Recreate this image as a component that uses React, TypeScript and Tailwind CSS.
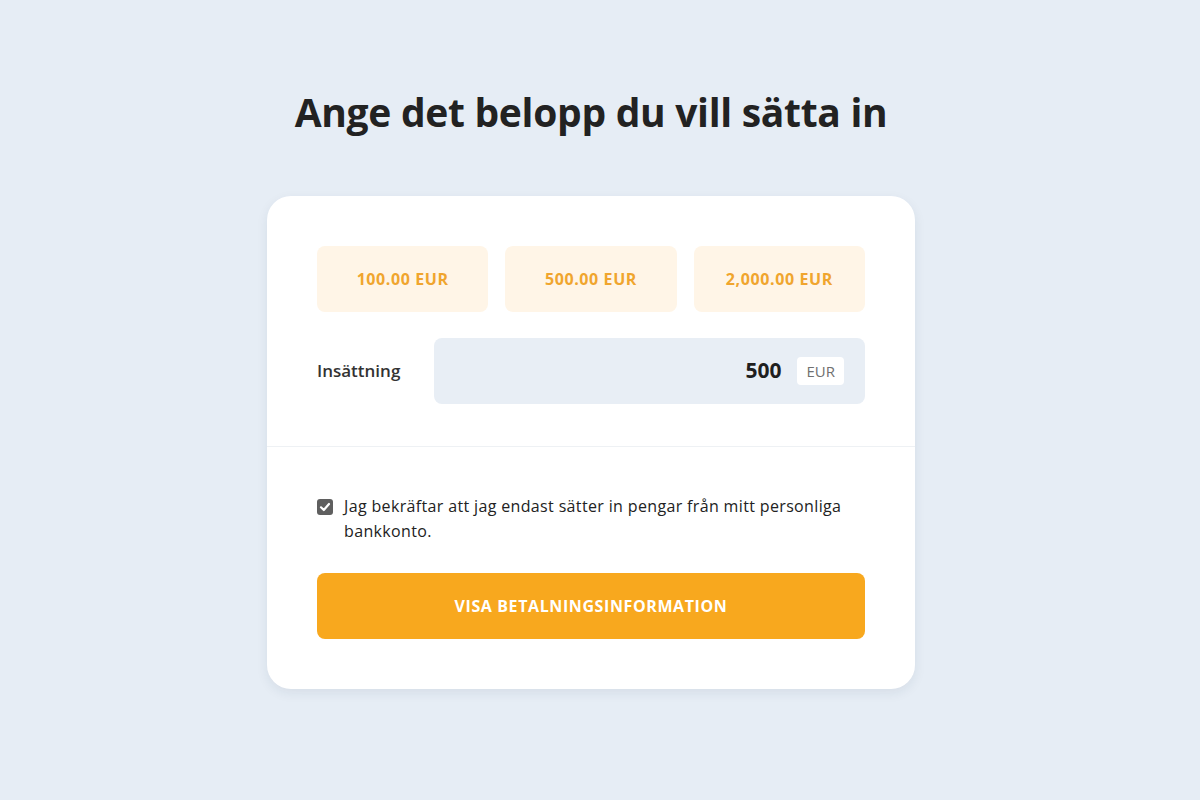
import React from "react";

export default function App() {
  return (
    <div
      className="min-h-[800px] w-full bg-[#e6edf5] flex flex-col items-center pr-[18px]"
      style={{ fontFamily: '"Open Sans", "Noto Sans", sans-serif' }}
    >
      <h1 className="mt-[84px] text-[39px] leading-[56px] font-bold text-[#222222] tracking-[-0.3px]">
        Ange det belopp du vill sätta in
      </h1>
      <div className="mt-[56px] w-[648px] bg-white rounded-[24px] shadow-[0_4px_12px_rgba(30,50,80,0.08)]">
        <div className="px-[50px] pt-[50px] pb-[42px] flex flex-col gap-[26px]">
          <div className="grid grid-cols-3 gap-[17px]">
            {["100.00 EUR", "500.00 EUR", "2,000.00 EUR"].map((t) => (
              <button
                key={t}
                className="h-[66px] rounded-[8px] bg-[#fff5e7] text-[#f0a52e] text-[16px] tracking-[0.6px] font-bold"
              >
                {t}
              </button>
            ))}
          </div>
          <div className="flex items-center">
            <div className="w-[117px] text-[17px] font-semibold text-[#333333]">Insättning</div>
            <div className="flex-1 h-[66px] rounded-[8px] bg-[#e8eef5] flex items-center justify-end pr-[21px]">
              <span className="text-[21px] font-bold text-[#1f1f1f]">500</span>
              <span className="ml-[16px] h-[28px] px-[9px] rounded-[4px] bg-white text-[15px] text-[#707070] flex items-center">
                EUR
              </span>
            </div>
          </div>
        </div>
        <div className="h-px bg-[#eef1f4]" />
        <div className="px-[50px] pt-[47px] pb-[50px]">
          <label className="flex items-start gap-[11px]">
            <span className="mt-[5px] w-[16px] h-[16px] shrink-0 rounded-[3px] bg-[#5f5f5f] flex items-center justify-center">
              <svg width="12" height="12" viewBox="0 0 12 12">
                <path d="M2 6.3 L4.8 9 L10 3" stroke="white" strokeWidth="2.2" fill="none" strokeLinecap="round" strokeLinejoin="round" />
              </svg>
            </span>
            <span className="text-[16px] leading-[25px] tracking-[0.35px] text-[#222222]">
              Jag bekräftar att jag endast sätter in pengar från mitt personliga bankkonto.
            </span>
          </label>
          <button className="mt-[29px] w-full h-[66px] rounded-[8px] bg-[#f8a81e] text-white text-[16px] tracking-[0.6px] font-bold">
            VISA BETALNINGSINFORMATION
          </button>
        </div>
      </div>
    </div>
  );
}
